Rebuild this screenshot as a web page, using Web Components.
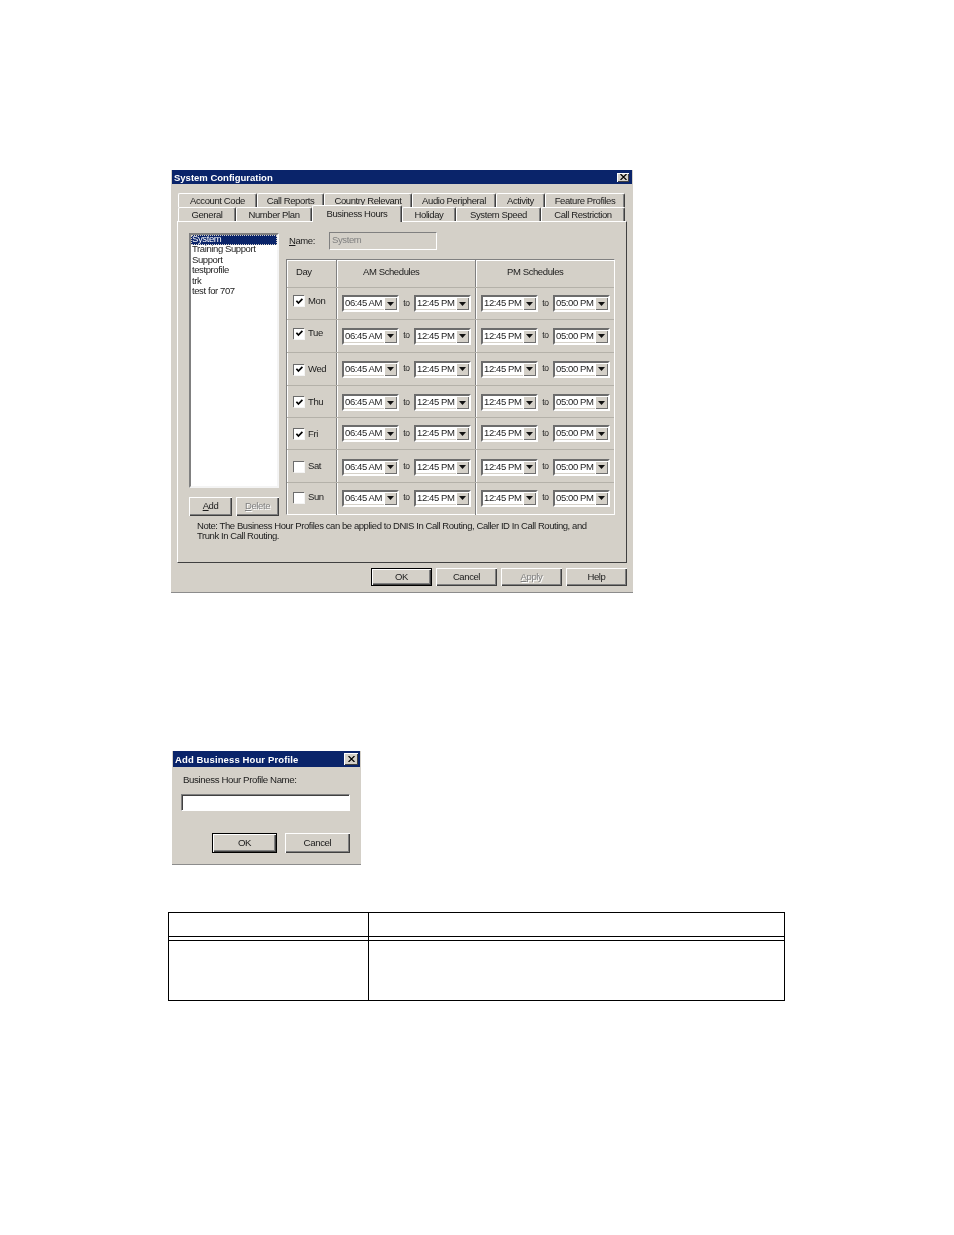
<!DOCTYPE html>
<html>
<head>
<meta charset="utf-8">
<title>System Configuration</title>
<style>
  html, body { margin: 0; background: #fff; }
  body { font: 9.5px/12px "Liberation Sans", Arial, sans-serif; letter-spacing: -.4px; color: #1c1c1c; }
</style>
</head>
<body>
<doc-page></doc-page>

<script>
// small helper, every component just sets its markup once
class Base extends HTMLElement {
  constructor() {
    super()
    this.attachShadow({ mode: 'open' })
  }
  connectedCallback() {
    this.shadowRoot.innerHTML = this.render()
  }
}

const arrow = `<svg width="7" height="4" viewBox="0 0 7 4"><path d="M0 0h7L3.5 4z" fill="#111"/></svg>`

class WinDialog extends Base {
  render() {
    return `
      <style>
        :host { display: block; background: #d4d0c8; border-bottom: 1px solid #8c8c8c; box-sizing: border-box; filter: blur(.25px); }
        .bar {
          height: var(--bar, 14px); margin: 0 1px; background: #0a246a; color: #fff;
          display: flex; align-items: center; justify-content: space-between;
          padding: 0 var(--x-pad, 3px) 0 2px; letter-spacing: var(--bar-ls, 0);
          font: bold 9.5px/14px "Liberation Sans", sans-serif;
        }
        .bar span:first-child { padding-top: 1px; }
        .x {
          width: var(--x-w, 12px); height: var(--x-h, 9px); background: #d4d0c8; display: flex; align-items: center; justify-content: center;
          box-shadow: inset 1px 1px #fff, inset -1px -1px #404040;
        }
      </style>
      <div class="bar"><span>${this.getAttribute('heading')}</span>
        <span class="x"><svg width="7" height="6" viewBox="0 0 7 6"><path d="M.5 0l6 6M6.5 0l-6 6" stroke="#000" stroke-width="1.2"/></svg></span>
      </div>
      <slot></slot>`
  }
}

class WinTab extends Base {
  render() {
    const on = this.hasAttribute('selected')
    return `
      <style>
        :host {
          display: block; box-sizing: border-box; height: ${on ? 17 : 14}px;
          width: ${this.getAttribute('w')}px;
          ${on ? 'margin-top: -2px; margin-bottom: -1px; position: relative; z-index: 1;' : ''}
          background: #d4d0c8; text-align: center; line-height: ${on ? 15 : 13}px;
          border-top: 1px solid #fff; border-left: 1px solid #fff; border-right: 1px solid #404040;
          border-radius: 2px 2px 0 0;
          box-shadow: inset -1px 0 #808080;
        }
      </style><slot></slot>`
  }
}

class WinButton extends Base {
  render() {
    const dis = this.hasAttribute('disabled')
    const def = this.hasAttribute('default')
    return `
      <style>
        :host {
          display: flex; align-items: center; justify-content: center; box-sizing: border-box;
          width: ${this.getAttribute('w')}px; height: ${this.getAttribute('h') || 18}px;
          background: #d4d0c8; padding-bottom: 1px;
          ${def ? 'border: 1px solid #000;' : ''}
          box-shadow: inset 1px 1px #fff, inset -1px -1px #404040, inset -2px -2px #808080;
          ${dis ? 'color: #808080; text-shadow: 1px 1px 0 #fff;' : ''}
        }
      </style><slot></slot>`
  }
}

class WinCheck extends Base {
  render() {
    const tick = this.hasAttribute('checked')
      ? `<svg width="9" height="9" viewBox="0 0 9 9"><path d="M1.4 3.8l2 2.2L7.4 1.8" fill="none" stroke="#000" stroke-width="1.7"/></svg>`
      : ''
    return `
      <style>
        :host {
          display: flex; align-items: center; justify-content: center; box-sizing: border-box;
          width: 11px; height: 11px; background: #fff;
          border-top: 1px solid #6c6c6c; border-left: 1px solid #6c6c6c;
          box-shadow: 1px 1px #f4f4f4;
        }
      </style>${tick}`
  }
}

class WinCombo extends Base {
  render() {
    return `
      <style>
        :host {
          display: flex; box-sizing: border-box; width: ${this.getAttribute('w') || 57}px; height: 17px;
          background: #fff; border: 2px solid; border-color: #6c6c6c #fff #fff #6c6c6c;
          line-height: 11px; padding-left: 1px;
          box-shadow: inset -1px -1px #d4d0c8;
        }
        span { flex: 1; white-space: nowrap; }
        i {
          width: 13px; height: 13px; background: #d4d0c8; display: flex; align-items: center; justify-content: center;
          box-shadow: inset 1px 1px #fff, inset -1px -1px #707070;
        }
      </style>
      <span>${this.getAttribute('value')}</span><i>${arrow}</i>`
  }
}

class ProfileList extends Base {
  render() {
    const items = ['System', 'Training Support', 'Support', 'testprofile', 'trk', 'test for 707']
    return `
      <style>
        :host {
          display: block; box-sizing: border-box; width: 90px; height: 255px; background: #fff;
          border: 2px solid; border-color: #808080 #f4f4f4 #f4f4f4 #808080;
        }
        div { padding-left: 1px; height: 10.4px; line-height: 8.8px; white-space: nowrap; }
        .sel { background: #0a246a; color: #fff; outline: 1px dotted #d4d0c8; outline-offset: -1px; }
      </style>
      ${items.map((t, i) => `<div class="${i ? '' : 'sel'}">${t}</div>`).join('')}`
  }
}

class ScheduleRow extends Base {
  render() {
    const a = n => this.getAttribute(n)
    return `
      <style>
        :host {
          display: grid; grid-template-columns: 49px 139px 1fr; height: var(--h, 33px);
          box-sizing: border-box; border-top: 1px solid #b4b1a9;
        }
        .c { display: flex; align-items: center; box-sizing: border-box; }
        .day { padding-left: 6px; gap: 4px; transform: translateY(var(--k, 0)); }
        .sch { padding-left: 5px; border-left: 1px solid #808080; box-shadow: inset 1px 0 #fff; }
        .sch > * { transform: translateY(var(--c, 0)); }
        .to { width: 15px; text-align: center; font-size: 8.5px; margin-top: -2px; }
      </style>
      <div class="c day"><win-check ${this.hasAttribute('checked') ? 'checked' : ''}></win-check><span>${a('day')}</span></div>
      <div class="c sch"><win-combo value="06:45 AM"></win-combo><span class="to">to</span><win-combo value="12:45 PM"></win-combo></div>
      <div class="c sch"><win-combo value="12:45 PM"></win-combo><span class="to">to</span><win-combo value="05:00 PM"></win-combo></div>`
  }
}

class ScheduleTable extends Base {
  render() {
    return `
      <style>
        :host {
          display: block; box-sizing: border-box; width: 329px; height: 256px;
          border: 1px solid; border-color: #808080 #fff #fff #808080;
          box-shadow: inset 1px 1px #fff;
        }
        .head { display: grid; grid-template-columns: 49px 139px 1fr; height: 27px; padding-left: 1px; margin-left: -1px; }
        .head div { line-height: 24px; }
        .head div + div { border-left: 1px solid #808080; box-shadow: inset 1px 0 #fff; }
      </style>
      <div class="head">
        <div style="padding-left:9px">Day</div>
        <div style="padding-left:26px">AM Schedules</div>
        <div style="padding-left:31px">PM Schedules</div>
      </div>
      <slot></slot>`
  }
}

class BusinessHours extends Base {
  render() {
    return `
      <style>
        :host {
          display: block; box-sizing: border-box; width: 450px; height: 342px; margin-left: 6px;
          background: #d4d0c8; border: 1px solid; border-color: #fff #404040 #404040 #fff;
          padding: 11px 11px 0 11px;
        }
        .top { display: flex; gap: 7px; }
        .side { width: 90px; }
        .btns { display: flex; justify-content: space-between; margin-top: 9px; }
        .main { width: 329px; }
        .name { display: flex; align-items: center; height: 18px; margin: -1px 0 9px; padding-left: 3px; }
        .name label { width: 40px; margin-top: -1px; }
        .name div {
          box-sizing: border-box; width: 108px; height: 18px; line-height: 14px; padding-left: 2px;
          border: 1px solid; border-color: #808080 #fff #fff #808080; color: #808080;
        }
        u { text-underline-offset: 1px; }
        .note { margin: 5px 0 0 8px; line-height: 10.4px; white-space: nowrap; letter-spacing: -.43px; }
      </style>
      <div class="top">
        <div class="side">
          <profile-list></profile-list>
          <div class="btns">
            <win-button w="43" h="19"><u>A</u>dd</win-button>
            <win-button w="43" h="19" disabled><u>D</u>elete</win-button>
          </div>
        </div>
        <div class="main">
          <div class="name"><label><u>N</u>ame:</label><div>System</div></div>
          <schedule-table>
            <schedule-row day="Mon" checked style="--h:32px;--c:0px;--k:-3px"></schedule-row>
            <schedule-row day="Tue" checked style="--h:33px;--c:0px;--k:-3px"></schedule-row>
            <schedule-row day="Wed" checked style="--h:33px;--c:0px;--k:0px"></schedule-row>
            <schedule-row day="Thu" checked style="--h:32px;--c:1px;--k:0px"></schedule-row>
            <schedule-row day="Fri" checked style="--h:32px;--c:0px;--k:0px"></schedule-row>
            <schedule-row day="Sat" style="--h:33px;--c:1px;--k:0px"></schedule-row>
            <schedule-row day="Sun" style="--h:33px;--c:-1px;--k:-2px"></schedule-row>
          </schedule-table>
        </div>
      </div>
      <div class="note">Note: The Business Hour Profiles can be applied to DNIS In Call Routing, Caller ID In Call Routing, and<br>Trunk In Call Routing.</div>`
  }
}

class DataTable extends Base {
  render() {
    return `
      <style>
        :host {
          display: grid; grid-template-columns: 199px 1fr; grid-template-rows: 24px 4px 1fr;
          box-sizing: border-box; width: 617px; height: 89px;
          border: 1px solid #000; background: #fff;
        }
        div { box-sizing: border-box; }
        .h { border-bottom: 1px solid #000; }
        .r { border-left: 1px solid #000; }
      </style>
      <div class="h"></div><div class="h r"></div>
      <div class="h"></div><div class="h r"></div>
      <div></div><div class="r"></div>`
  }
}

class DocPage extends Base {
  render() {
    const row1 = [['Account Code', 79], ['Call Reports', 67], ['Country Relevant', 88], ['Audio Peripheral', 84], ['Activity', 49], ['Feature Profiles', 80]]
    const row2 = [['General', 58], ['Number Plan', 76], ['Business Hours', 90, 1], ['Holiday', 54], ['System Speed', 85], ['Call Restriction', 84]]
    const tabs = r => r.map(([t, w, s]) => `<win-tab w="${w}" ${s ? 'selected' : ''}>${t}</win-tab>`).join('')
    return `
      <style>
        :host { display: block; height: 1235px; padding-top: 170px; box-sizing: border-box; }
        .sys { width: 462px; height: 423px; margin-left: 171px; }
        .tabs { display: flex; margin-left: 7px; }
        .tabs.a { margin-top: 9px; }
        .actions { display: flex; margin: 5px 0 0 200px; gap: 4px; }
        .add { width: 189px; height: 114px; margin: 158px 0 0 172px; --bar: 16px; --bar-ls: .12px; --x-w: 14px; --x-h: 12px; --x-pad: 2px; font-size: 9.7px; }
        .add p { margin: 0; padding: 7px 0 0 11px; }
        .field {
          box-sizing: border-box; width: 169px; height: 17px; margin: 8px 0 0 9px; background: #fff;
          border: 1px solid; border-color: #808080 #fff #fff #808080; box-shadow: inset 1px 1px #404040;
        }
        .add .actions { margin: 22px 0 0 40px; gap: 8px; }
        data-table { margin: 47px 0 0 168px; }
      </style>
      <win-dialog class="sys" heading="System Configuration">
        <div class="tabs a">${tabs(row1)}</div>
        <div class="tabs">${tabs(row2)}</div>
        <business-hours></business-hours>
        <div class="actions">
          <win-button w="61" default>OK</win-button>
          <win-button w="61">Cancel</win-button>
          <win-button w="61" disabled><u>A</u>pply</win-button>
          <win-button w="61">Help</win-button>
        </div>
      </win-dialog>
      <win-dialog class="add" heading="Add Business Hour Profile">
        <p>Business Hour Profile Name:</p>
        <div class="field"></div>
        <div class="actions">
          <win-button w="65" h="20" default>OK</win-button>
          <win-button w="65" h="20">Cancel</win-button>
        </div>
      </win-dialog>
      <data-table></data-table>`
  }
}

customElements.define('win-dialog', WinDialog)
customElements.define('win-tab', WinTab)
customElements.define('win-button', WinButton)
customElements.define('win-check', WinCheck)
customElements.define('win-combo', WinCombo)
customElements.define('profile-list', ProfileList)
customElements.define('schedule-row', ScheduleRow)
customElements.define('schedule-table', ScheduleTable)
customElements.define('business-hours', BusinessHours)
customElements.define('data-table', DataTable)
customElements.define('doc-page', DocPage)
</script>
</body>
</html>
